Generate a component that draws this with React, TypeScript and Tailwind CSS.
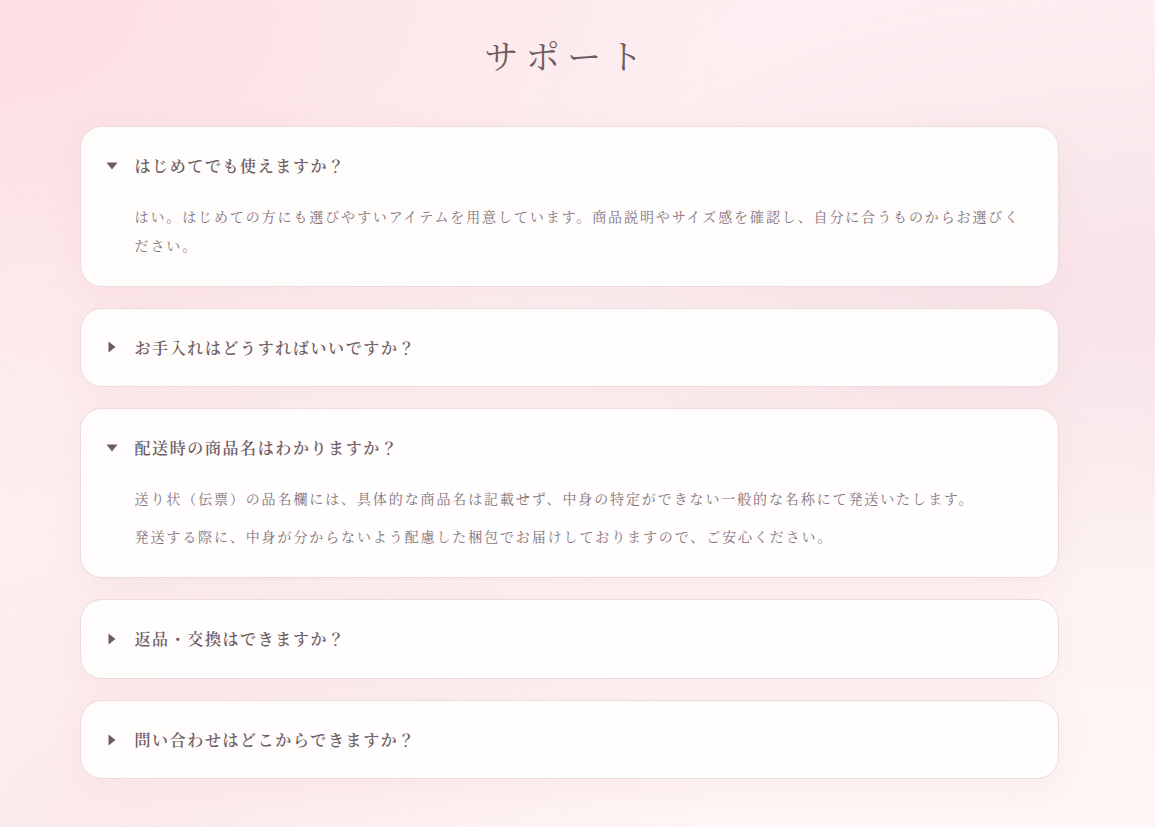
import React from "react";

type Item = { q: string; a?: string[]; open: boolean };

const items: Item[] = [
  {
    q: "はじめてでも使えますか？",
    a: [
      "はい。はじめての方にも選びやすいアイテムを用意しています。商品説明やサイズ感を確認し、自分に合うものからお選びください。",
    ],
    open: true,
  },
  { q: "お手入れはどうすればいいですか？", open: false },
  {
    q: "配送時の商品名はわかりますか？",
    a: [
      "送り状（伝票）の品名欄には、具体的な商品名は記載せず、中身の特定ができない一般的な名称にて発送いたします。",
      "発送する際に、中身が分からないよう配慮した梱包でお届けしておりますので、ご安心ください。",
    ],
    open: true,
  },
  { q: "返品・交換はできますか？", open: false },
  { q: "問い合わせはどこからできますか？", open: false },
];

function Tri({ open }: { open: boolean }) {
  return open ? (
    <svg width="12" height="8" viewBox="0 0 12 8" className="shrink-0">
      <path d="M0.5 0.5 H11.5 L6 7.5 Z" fill="#6f5b61" />
    </svg>
  ) : (
    <svg width="8" height="12" viewBox="0 0 8 12" className="shrink-0">
      <path d="M0.5 0.5 V11.5 L7.5 6 Z" fill="#6f5b61" />
    </svg>
  );
}

export default function App() {
  return (
    <div
      className="min-h-screen w-full bg-[radial-gradient(ellipse_at_0%_0%,#fcdde2_0%,rgba(252,221,226,0)_45%),radial-gradient(ellipse_at_100%_35%,#f7e3e8_0%,rgba(247,227,232,0)_40%),radial-gradient(ellipse_at_10%_100%,#fce9ea_0%,rgba(252,233,234,0)_40%),linear-gradient(180deg,#fdeff1_0%,#fdf2f2_50%,#fff6f5_100%)] pb-[49px] pt-[33px] pr-[17px]"
      style={{ fontFamily: '"Noto Serif CJK JP", "Noto Serif JP", "IPAMincho", "Liberation Serif", serif' }}
    >
      <h1 className="text-center text-[34px] leading-[44px] tracking-[0.22em] text-[#6c5b60] pr-[0.1em]">
        サポート
      </h1>
      <div className="mx-auto mt-[49px] flex w-[979px] flex-col gap-[21px]">
        {items.map((it, i) => (
          <div
            key={i}
            className="rounded-[22px] border border-[#ecdadd] bg-[rgba(255,253,253,0.95)] px-[25px] py-[26px] shadow-[0_8px_30px_rgba(235,190,200,0.18)]"
          >
            <div className="flex items-center">
              <div className="flex w-[29px] items-center justify-start">
                <span className={it.open ? "" : "pl-[2px]"}>
                  <Tri open={it.open} />
                </span>
              </div>
              <div className="text-[16px] font-semibold leading-[25.6px] tracking-[0.1em] text-[#6e5d62]">
                {it.q}
              </div>
            </div>
            {it.open && it.a && (
              <div className="mt-[23px] flex flex-col gap-[9.5px] pl-[29px] pr-[3px]">
                {it.a.map((p, j) => (
                  <p key={j} className="text-[14px] leading-[29px] tracking-[0.135em] text-[#84737a]">
                    {p}
                  </p>
                ))}
              </div>
            )}
          </div>
        ))}
      </div>
    </div>
  );
}
